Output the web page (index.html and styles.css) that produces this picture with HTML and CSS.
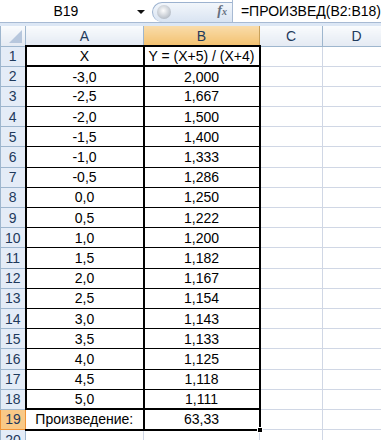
FILE: index.html
```html
<!DOCTYPE html>
<html lang="ru">
<head>
    <meta charset="UTF-8">
    <title>Excel</title>
    <link rel="stylesheet" href="styles.css">
</head>
<body>
    <div class="bar">
        <div class="namebox">
            <span class="name">B19</span>
            <span class="arrow"></span>
        </div>
        <div class="tools">
            <span class="knob"></span>
            <span class="fx"><i>f</i><small>x</small></span>
        </div>
        <div class="formula">=ПРОИЗВЕД(B2:B18)</div>
    </div>
    <div class="band"></div>

    <table class="sheet">
        <colgroup>
            <col class="c-h">
            <col class="c-a">
            <col class="c-b">
            <col class="c-c">
            <col class="c-d">
        </colgroup>
        <tr class="head">
            <th class="corner"><span></span></th>
            <th>A</th>
            <th class="sel">B</th>
            <th>C</th>
            <th>D</th>
        </tr>
        <tr class="title">
            <th>1</th>
            <td class="a">X</td>
            <td class="b">Y = (X+5) / (X+4)</td>
            <td></td><td></td>
        </tr>
    </table>

    <script>
        // данные для строк 2-18
        let sheet=document.querySelector('.sheet');
        let row=2;
        for(let x=-3;x<=5;x+=0.5){
            let y=(x+5)/(x+4);
            let tr=document.createElement('tr');
            tr.className=row==18?'data last':'data';
            tr.innerHTML='<th>'+row+'</th>'+
                '<td class="a">'+x.toFixed(1).replace('.',',')+'</td>'+
                '<td class="b">'+y.toFixed(3).replace('.',',')+'</td>'+
                '<td></td><td></td>';
            sheet.appendChild(tr);
            row+=1;
        }
        let total=document.createElement('tr');
        total.className='total';
        total.innerHTML='<th class="sel">19</th>'+
            '<td class="a">Произведение:</td>'+
            '<td class="b"><span class="handle"></span>63,33</td>'+
            '<td></td><td></td>';
        sheet.appendChild(total);
        let empty=document.createElement('tr');
        empty.className='data';
        empty.innerHTML='<th>20</th><td></td><td></td><td></td><td></td>';
        sheet.appendChild(empty);
    </script>
</body>
</html>
```

FILE: styles.css
```css
*{
  margin: 0;
  padding: 0;
  box-sizing: border-box;
}
body {
  width: 381px;
  height: 440px;
  overflow: hidden;
  background: #fff;
  font-family: "Liberation Sans", Arial, sans-serif;
}

/* строка формул */
.bar {
  display: flex;
  height: 23px;
  border-bottom: 1px solid #a7bad3;
}
.namebox {
  position: relative;
  width: 158px;
  padding-right: 20px;
  display: flex;
  align-items: center;
  justify-content: center;
  font-size: 14px;
  color: #000;
}
.namebox .arrow {
  position: absolute;
  right: 7px;
  top: 10px;
  width: 0;
  height: 0;
  border-left: 4px solid transparent;
  border-right: 4px solid transparent;
  border-top: 4px solid #111;
}
.tools {
  position: relative;
  width: 84px;
  margin-top: 2px;
  border-radius: 11px 0 0 11px;
  border: 1px solid #9cb2cf;
  border-right: none;
  border-bottom: none;
  background: linear-gradient(#f2f6fb, #d9e4f2);
}
.tools .knob {
  position: absolute;
  left: 4px;
  top: 2px;
  width: 14px;
  height: 14px;
  border-radius: 50%;
  background: radial-gradient(circle at 45% 40%, #fdfdfd, #b9c0c9 70%, #8e97a3);
}
.tools .fx {
  position: absolute;
  right: 5px;
  top: 0;
  font-family: "Liberation Serif", serif;
  font-weight: bold;
  color: #667080;
  font-size: 14px;
}
.tools .fx small {
  font-size: 10px;
  font-style: italic;
}
.formula {
  flex: 1;
  padding-left: 8px;
  line-height: 22px;
  font-size: 14px;
  border-left: 1px solid #a7bad3;
  white-space: nowrap;
}
.band {
  height: 3px;
  background: #dce7f5;
}

/* лист */
.sheet {
  border-collapse: collapse;
  table-layout: fixed;
  width: 390px;
  font-size: 14px;
}
.c-h { width: 25px; }
.c-a { width: 118px; }
.c-b { width: 116px; }
.c-c { width: 63px; }
.c-d { width: 68px; }

.sheet td,
.sheet th {
  height: 20.2px;
  border: 1px solid #d0d7e5;
  text-align: center;
  font-weight: normal;
  white-space: nowrap;
  padding: 0;
}
.sheet th {
  background: #e4ecf7;
  color: #1f3a5c;
  border-color: #9eb6ce;
}
.sheet .head th {
  height: 20px;
  background: linear-gradient(#f9fbfd, #e4eaf3);
  border-top: none;
}
.sheet .head th.sel {
  background: linear-gradient(#f9dcaa, #f3c271);
  border-color: #f29436 #c8a15b #f29436 #f29436;
}
.sheet .corner {
  position: relative;
  background: #dfe7f2;
}
.sheet .corner span {
  position: absolute;
  right: 3px;
  bottom: 3px;
  width: 0;
  height: 0;
  border-left: 13px solid transparent;
  border-bottom: 13px solid #b7c7dd;
}
.sheet th.sel {
  background: #f8c987;
  border-color: #f29436;
}

.sheet td.a {
  border-left: 2px solid #000;
  border-right: 2px solid #000;
  border-bottom: 1px solid #000;
}
.sheet td.b {
  border-right: 2px solid #000;
  border-bottom: 1px solid #000;
}
.sheet .title td.a,
.sheet .title td.b {
  border-top: 2px solid #000;
  border-bottom: 2px solid #000;
}
.sheet .last td.a,
.sheet .last td.b {
  border-bottom: 2px solid #000;
}
.sheet .total td.a {
  border-left: 1px solid #d0d7e5;
  border-right: 1px solid #000;
  border-bottom: 2px solid #000;
}
.sheet .total td.b {
  position: relative;
  border: 2px solid #000;
}
.total .handle {
  position: absolute;
  right: -4px;
  bottom: -4px;
  width: 6px;
  height: 6px;
  background: #000;
  border: 1px solid #fff;
}
```
